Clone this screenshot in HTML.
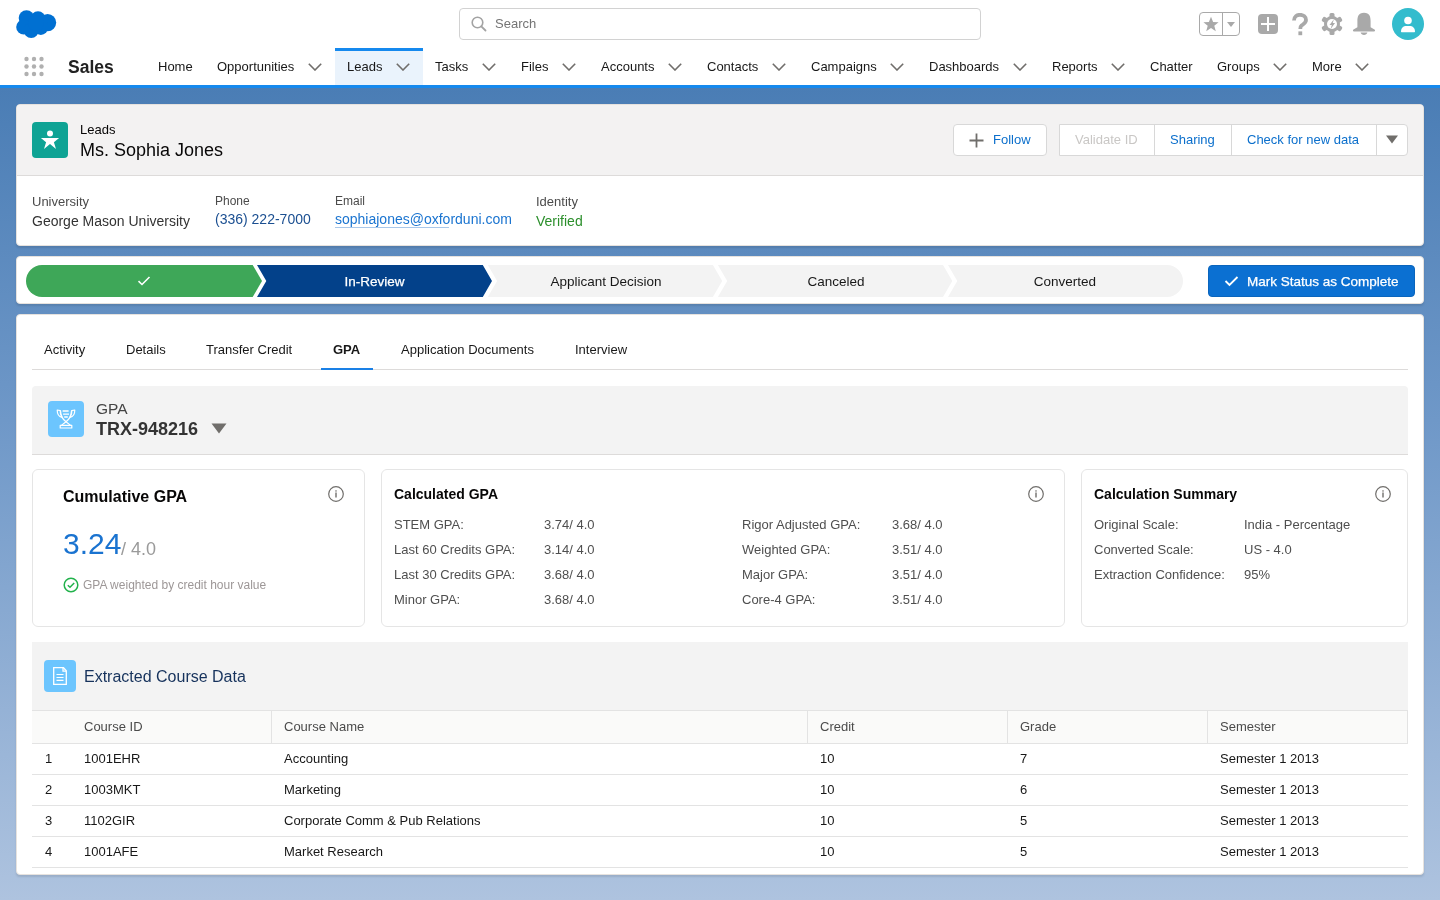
<!DOCTYPE html>
<html><head><meta charset="utf-8">
<style>body>*{will-change:transform}
*{box-sizing:border-box;margin:0;padding:0}
html,body{width:1440px;height:900px;overflow:hidden}
body{font-family:"Liberation Sans",sans-serif;color:#181818;position:relative;
 background:linear-gradient(to bottom,#4a7db5 88px,#6f98c8 420px,#aec3df 900px);}
.a{position:absolute;white-space:nowrap}
.t13{font-size:13px;line-height:13px}
.t12{font-size:12px;line-height:12px}
.t14{font-size:14px;line-height:14px}
#hdr{position:absolute;left:0;top:0;width:1440px;height:85px;background:#fff}
#hline{position:absolute;left:0;top:85px;width:1440px;height:3px;background:#1589ee}
.nav{color:#181818}
.chev{position:absolute;top:63px;width:14px;height:8px}
.card{position:absolute;background:#fff;border-radius:4px;border:1px solid #e6e2de;box-shadow:0 2px 2px rgba(0,0,0,0.1)}
.lbl{color:#4b4b4b}
.btn{position:absolute;border:1px solid #d8d8d8;background:#fff;font-size:13px;line-height:30px;color:#0b6fcc}
.sc{position:absolute;border:1px solid #e5e5e5;border-radius:6px;background:#fff}
.rowl{color:#4f4f4f;font-size:13px;line-height:13px}
.th{color:#4b4b4b;font-size:13px;line-height:13px}
.td{color:#181818;font-size:13px;line-height:13px}
.hr{position:absolute;left:32px;width:1376px;height:1px;background:#e3e3e3}
.vr{position:absolute;top:710px;width:1px;height:33px;background:#e3e3e3}
</style></head><body>

<!-- HEADER -->
<div id="hdr"></div>
<div id="hline"></div>
<!-- logo -->
<svg class="a" style="left:16px;top:9px" width="42" height="30" viewBox="0 0 42 30"><g fill="#0070d2">
 <circle cx="10.5" cy="9" r="7.8"/><circle cx="22" cy="9.8" r="7.5"/><circle cx="31.6" cy="13.6" r="8.6"/>
 <circle cx="7.8" cy="18" r="7.6"/><circle cx="15.2" cy="21.4" r="7.6"/><circle cx="24.8" cy="18.6" r="7.4"/><circle cx="20" cy="14" r="8"/></g></svg>
<!-- search -->
<div class="a" style="left:459px;top:8px;width:522px;height:32px;border:1px solid #d2d2d2;border-radius:4px;background:#fff"></div>
<svg class="a" style="left:470px;top:15px" width="18" height="18" viewBox="0 0 18 18"><circle cx="7.5" cy="7.5" r="5.3" fill="none" stroke="#a3a3a3" stroke-width="1.6"/><line x1="11.3" y1="11.3" x2="15.5" y2="15.5" stroke="#a3a3a3" stroke-width="1.8" stroke-linecap="round"/></svg>
<div class="a t13" style="left:495px;top:17px;color:#747474">Search</div>
<!-- right icons -->
<div class="a" style="left:1199px;top:12px;width:41px;height:24px;border:1px solid #a9a9a9;border-radius:4px"></div>
<div class="a" style="left:1222px;top:12px;width:1px;height:24px;background:#a9a9a9"></div>
<svg class="a" style="left:1203px;top:16px" width="16" height="16" viewBox="0 0 16 16"><path d="M8 0.8 L10.1 6.1 L15.6 6.3 L11.3 9.7 L12.8 15.2 L8 12 L3.2 15.2 L4.7 9.7 L0.4 6.3 L5.9 6.1Z" fill="#a9a9a9"/></svg>
<svg class="a" style="left:1226px;top:21px" width="10" height="7" viewBox="0 0 10 7"><path d="M1 1H9L5 6Z" fill="#a9a9a9"/></svg>
<div class="a" style="left:1258px;top:14px;width:20px;height:20px;border-radius:4px;background:#a9a9a9"></div>
<div class="a" style="left:1261px;top:23px;width:14px;height:2px;background:#fff"></div>
<div class="a" style="left:1267px;top:17px;width:2px;height:14px;background:#fff"></div>
<svg class="a" style="left:1290px;top:13px" width="20" height="24" viewBox="0 0 20 24"><path d="M4 7.5 C4 3.5 7 1.8 10 1.8 C13.5 1.8 16 4 16 7 C16 10 13.5 11 11.5 12.5 C10.5 13.3 10.3 14 10.3 16" fill="none" stroke="#a9a9a9" stroke-width="3.8"/><rect x="8.4" y="18.4" width="3.8" height="3.8" fill="#a9a9a9"/></svg>
<svg class="a" style="left:1321px;top:12px" width="22" height="24" viewBox="0 0 22 24">
 <g fill="#a9a9a9"><circle cx="11" cy="12" r="8"/>
 <rect x="8.5" y="1" width="5" height="22" rx="1.5"/>
 <rect x="8.5" y="1" width="5" height="22" rx="1.5" transform="rotate(60 11 12)"/>
 <rect x="8.5" y="1" width="5" height="22" rx="1.5" transform="rotate(-60 11 12)"/></g>
 <circle cx="11" cy="12" r="5" fill="#fff"/>
 <path d="M12.9 7.3 L8.5 13 H10.8 L9.7 16.9 L14 11.1 H11.7Z" fill="#a9a9a9"/>
</svg>
<svg class="a" style="left:1352px;top:12px" width="24" height="24" viewBox="0 0 24 24"><path d="M12 0.8 C17.6 0.8 18.6 4.8 18.6 9 V15.2 L22.5 17.5 C23.4 18 23.2 19.4 22 19.4 H2 C0.8 19.4 0.6 18 1.5 17.5 L5.4 15.2 V9 C5.4 4.8 6.4 0.8 12 0.8Z" fill="#a9a9a9"/><path d="M8.6 20.6 H15.4 C15 22.2 13.7 23 12 23 C10.3 23 9 22.2 8.6 20.6Z" fill="#a9a9a9"/></svg>
<div class="a" style="left:1392px;top:8px;width:32px;height:32px;border-radius:50%;background:#33bccd"></div>
<svg class="a" style="left:1398px;top:14px" width="20" height="20" viewBox="0 0 20 20"><circle cx="10" cy="6.5" r="3.8" fill="#fff"/><path d="M3 17.6 C3 14 5.2 12 8.6 12 H11.4 C14.8 12 17 14 17 17.6 C17 18 16.8 18.2 16.4 18.2 H3.6 C3.2 18.2 3 18 3 17.6Z" fill="#fff"/></svg>

<!-- nav row -->
<svg class="a" style="left:22px;top:56px" width="24" height="22" viewBox="0 -0.5 24 22"><g fill="#b0b0b0">
<circle cx="4.5" cy="2.5" r="2.2"/><circle cx="12" cy="2.5" r="2.2"/><circle cx="19.5" cy="2.5" r="2.2"/>
<circle cx="4.5" cy="10" r="2.2"/><circle cx="12" cy="10" r="2.2"/><circle cx="19.5" cy="10" r="2.2"/>
<circle cx="4.5" cy="17.5" r="2.2"/><circle cx="12" cy="17.5" r="2.2"/><circle cx="19.5" cy="17.5" r="2.2"/></g></svg>
<div class="a" style="left:68px;top:59px;font-size:17.5px;line-height:17.5px;font-weight:bold;color:#222">Sales</div>
<div class="a" style="left:335px;top:48px;width:88px;height:37px;background:#eaf3fc;border-top:3px solid #1589ee"></div>
<div class="a t13 nav" style="left:158px;top:60px">Home</div>
<div class="a t13 nav" style="left:217px;top:60px">Opportunities</div>
<div class="a t13 nav" style="left:347px;top:60px">Leads</div>
<div class="a t13 nav" style="left:435px;top:60px">Tasks</div>
<div class="a t13 nav" style="left:521px;top:60px">Files</div>
<div class="a t13 nav" style="left:601px;top:60px">Accounts</div>
<div class="a t13 nav" style="left:707px;top:60px">Contacts</div>
<div class="a t13 nav" style="left:811px;top:60px">Campaigns</div>
<div class="a t13 nav" style="left:929px;top:60px">Dashboards</div>
<div class="a t13 nav" style="left:1052px;top:60px">Reports</div>
<div class="a t13 nav" style="left:1150px;top:60px">Chatter</div>
<div class="a t13 nav" style="left:1217px;top:60px">Groups</div>
<div class="a t13 nav" style="left:1312px;top:60px">More</div>
<svg width="0" height="0" style="position:absolute"><defs><path id="chv" d="M0.8 0.8 L7 7 L13.2 0.8" fill="none" stroke="#706e6b" stroke-width="1.6"/></defs></svg>
<svg class="chev" style="left:308px"><use href="#chv"/></svg>
<svg class="chev" style="left:396px"><use href="#chv"/></svg>
<svg class="chev" style="left:482px"><use href="#chv"/></svg>
<svg class="chev" style="left:562px"><use href="#chv"/></svg>
<svg class="chev" style="left:668px"><use href="#chv"/></svg>
<svg class="chev" style="left:772px"><use href="#chv"/></svg>
<svg class="chev" style="left:890px"><use href="#chv"/></svg>
<svg class="chev" style="left:1013px"><use href="#chv"/></svg>
<svg class="chev" style="left:1111px"><use href="#chv"/></svg>
<svg class="chev" style="left:1273px"><use href="#chv"/></svg>
<svg class="chev" style="left:1355px"><use href="#chv"/></svg>

<!-- RECORD HEADER CARD -->
<div class="card" style="left:16px;top:104px;width:1408px;height:142px;overflow:hidden">
  <div style="position:absolute;left:0;top:0;width:1406px;height:71px;background:#f3f2f2;border-bottom:1px solid #dddbda"></div>
</div>
<div class="a" style="left:32px;top:122px;width:36px;height:36px;border-radius:4px;background:#0ea394"></div>
<svg class="a" style="left:32px;top:122px" width="36" height="36" viewBox="0 0 36 36"><circle cx="18" cy="11.6" r="3" fill="#fff"/><path d="M8.9 16 H27.1 L21.9 20.2 L24 27 L18 22 L12 27 L14.1 20.2Z" fill="#fff"/></svg>
<div class="a t13" style="left:80px;top:123px;color:#080707">Leads</div>
<div class="a" style="left:80px;top:141px;font-size:18px;line-height:18px;color:#080707">Ms. Sophia Jones</div>

<div class="btn" style="left:953px;top:124px;width:94px;height:32px;border-radius:4px"></div>
<svg class="a" style="left:969px;top:133px" width="15" height="15" viewBox="0 0 15 15"><path d="M7.5 0.5V14.5M0.5 7.5H14.5" stroke="#706e6b" stroke-width="1.8"/></svg>
<div class="a t13" style="left:993px;top:133px;color:#0b6fcc">Follow</div>
<div class="btn" style="left:1059px;top:124px;width:349px;height:32px;border-radius:0 4px 4px 0"></div>
<div class="a" style="left:1154px;top:125px;width:1px;height:30px;background:#d8d8d8"></div>
<div class="a" style="left:1231px;top:125px;width:1px;height:30px;background:#d8d8d8"></div>
<div class="a" style="left:1376px;top:125px;width:1px;height:30px;background:#d8d8d8"></div>
<div class="a t13" style="left:1075px;top:133px;color:#c9c7c5">Validate ID</div>
<div class="a t13" style="left:1170px;top:133px;color:#0b6fcc">Sharing</div>
<div class="a t13" style="left:1247px;top:133px;color:#0b6fcc">Check for new data</div>
<svg class="a" style="left:1386px;top:135px" width="12" height="9" viewBox="0 0 12 9"><path d="M0 0.5H12L6 8.5Z" fill="#706e6b"/></svg>

<div class="a t13 lbl" style="left:32px;top:195px">University</div>
<div class="a t14" style="left:32px;top:214px;color:#333">George Mason University</div>
<div class="a t12 lbl" style="left:215px;top:195px">Phone</div>
<div class="a t14" style="left:215px;top:212px;color:#1b4f91">(336) 222-7000</div>
<div class="a t12 lbl" style="left:335px;top:195px">Email</div>
<div class="a t14" style="left:335px;top:212px;color:#1a74d0">sophiajones@oxforduni.com</div>
<div class="a" style="left:335px;top:227px;width:114px;height:1px;background:#a9c8ea"></div>
<div class="a t13 lbl" style="left:536px;top:195px">Identity</div>
<div class="a t14" style="left:536px;top:214px;color:#2c8f2c">Verified</div>

<!-- PATH -->
<div class="card" style="left:16px;top:256px;width:1408px;height:48px"></div>
<svg class="a" style="left:0;top:256px" width="1440" height="48" viewBox="0 256 1440 48">
  <path d="M42 265 H252.7 L262 281 L252.7 297 H42 A16 16 0 0 1 42 265Z" fill="#3ea758"/>
  <path d="M257 265 H482.8 L492 281 L482.8 297 H257 L266.3 281Z" fill="#03418a"/>
  <path d="M487.8 265 H712.9 L722.2 281 L712.9 297 H487.8 L497.1 281Z" fill="#f3f3f3"/>
  <path d="M717.9 265 H943 L952.3 281 L943 297 H717.9 L727.2 281Z" fill="#f3f3f3"/>
  <path d="M948 265 H1167 A16 16 0 0 1 1167 297 H948 L957.3 281Z" fill="#f3f3f3"/>
</svg>
<svg class="a" style="left:137px;top:275px" width="14" height="12" viewBox="0 0 14 12"><path d="M1.5 6.2 L5 9.5 L12.5 2" fill="none" stroke="#fff" stroke-width="1.6"/></svg>
<div class="a" style="left:257px;top:275px;width:235px;text-align:center;color:#fff;font-size:13.5px;line-height:13px;-webkit-text-stroke:0.25px #fff">In-Review</div>
<div class="a" style="left:490px;top:275px;width:232px;text-align:center;color:#181818;font-size:13.5px;line-height:13px">Applicant Decision</div>
<div class="a" style="left:720px;top:275px;width:232px;text-align:center;color:#181818;font-size:13.5px;line-height:13px">Canceled</div>
<div class="a" style="left:950px;top:275px;width:230px;text-align:center;color:#181818;font-size:13.5px;line-height:13px">Converted</div>
<div class="a" style="left:1208px;top:265px;width:207px;height:32px;border-radius:4px;background:#0b70d2;border:1px solid #0a65bd"></div>
<svg class="a" style="left:1224px;top:275px" width="15" height="12" viewBox="0 0 15 12"><path d="M1.5 6 L5.5 10 L13.5 2" fill="none" stroke="#fff" stroke-width="1.8"/></svg>
<div class="a" style="left:1247px;top:275px;font-size:13.5px;line-height:13.5px;color:#fff;-webkit-text-stroke:0.25px #fff">Mark Status as Complete</div>

<!-- MAIN CARD -->
<div class="card" style="left:16px;top:314px;width:1408px;height:561px"></div>
<div class="a t13" style="left:44px;top:343px">Activity</div>
<div class="a t13" style="left:126px;top:343px">Details</div>
<div class="a t13" style="left:206px;top:343px">Transfer Credit</div>
<div class="a t13" style="left:333px;top:343px;font-weight:bold">GPA</div>
<div class="a t13" style="left:401px;top:343px">Application Documents</div>
<div class="a t13" style="left:575px;top:343px">Interview</div>
<div class="a" style="left:32px;top:369px;width:1376px;height:1px;background:#dddbda"></div>
<div class="a" style="left:321px;top:368px;width:52px;height:2px;background:#1a80e6"></div>

<!-- GPA header -->
<div class="a" style="left:32px;top:386px;width:1376px;height:69px;background:#f3f3f3;border-radius:4px 4px 0 0;border-bottom:1px solid #dddbda"></div>
<div class="a" style="left:48px;top:401px;width:36px;height:36px;border-radius:4px;background:#6cc5fe"></div>
<svg class="a" style="left:48px;top:401px" width="36" height="36" viewBox="0 0 36 36"><g fill="none" stroke="#fff" stroke-width="1.2" stroke-linejoin="round">
<path d="M9.2 9 L12.2 9.6 C12 12 12.6 14.5 14 16.4 C11.2 15.8 9.2 13 9.2 9Z"/>
<path d="M26.8 9 L23.8 9.6 C24 12 23.4 14.5 22 16.4 C24.8 15.8 26.8 13 26.8 9Z"/>
<path d="M12.4 9.4 C12.8 15 15.2 18.8 18 20.8 L22.6 24.4"/>
<path d="M23.6 9.4 C23.2 15 20.8 18.8 18 20.8 L13.4 24.4"/>
<rect x="12.2" y="24.4" width="11.6" height="2.6"/></g>
<g stroke="#fff" stroke-width="1.3"><path d="M14.6 10H20.6M15.1 13.2H21M16.2 16H19.8"/></g></svg>
<div class="a" style="left:96px;top:401px;font-size:15.5px;line-height:15.5px;color:#444">GPA</div>
<div class="a" style="left:96px;top:420px;font-size:18px;line-height:18px;font-weight:bold;color:#333">TRX-948216</div>
<svg class="a" style="left:211px;top:423px" width="16" height="11" viewBox="0 0 16 11"><path d="M0.5 0.5H15.5L8 10.5Z" fill="#706e6b"/></svg>

<!-- stat cards -->
<div class="sc" style="left:32px;top:469px;width:333px;height:158px"></div>
<div class="sc" style="left:381px;top:469px;width:684px;height:158px"></div>
<div class="sc" style="left:1081px;top:469px;width:327px;height:158px"></div>
<svg width="0" height="0" style="position:absolute"><defs><g id="info"><circle cx="8" cy="8" r="7.3" fill="none" stroke="#706e6b" stroke-width="1.2"/><rect x="7.3" y="6.5" width="1.4" height="5" fill="#706e6b"/><rect x="7.3" y="4.3" width="1.4" height="1.3" fill="#706e6b"/></g></defs></svg>
<svg class="a" style="left:328px;top:486px" width="16" height="16"><use href="#info"/></svg>
<svg class="a" style="left:1028px;top:486px" width="16" height="16"><use href="#info"/></svg>
<svg class="a" style="left:1375px;top:486px" width="16" height="16"><use href="#info"/></svg>

<div class="a" style="left:63px;top:489px;font-size:16px;line-height:16px;font-weight:bold;color:#080707">Cumulative GPA</div>
<div class="a" style="left:63px;top:529px;font-size:30px;line-height:30px;color:#1a73d0">3.24</div>
<div class="a" style="left:121px;top:540px;font-size:18px;line-height:18px;color:#9a9a9a">/ 4.0</div>
<svg class="a" style="left:63px;top:577px" width="16" height="16" viewBox="0 0 16 16"><circle cx="8" cy="8" r="6.8" fill="none" stroke="#22b24c" stroke-width="1.5"/><path d="M4.8 8.2 L7 10.3 L11.2 6" fill="none" stroke="#22b24c" stroke-width="1.5"/></svg>
<div class="a t12" style="left:83px;top:579px;color:#9d9797">GPA weighted by credit hour value</div>

<div class="a" style="left:394px;top:487px;font-size:14px;line-height:14px;font-weight:bold;color:#080707">Calculated GPA</div>
<div class="a rowl" style="left:394px;top:518px">STEM GPA:</div>
<div class="a rowl" style="left:394px;top:543px">Last 60 Credits GPA:</div>
<div class="a rowl" style="left:394px;top:568px">Last 30 Credits GPA:</div>
<div class="a rowl" style="left:394px;top:593px">Minor GPA:</div>
<div class="a rowl" style="left:544px;top:518px">3.74/ 4.0</div>
<div class="a rowl" style="left:544px;top:543px">3.14/ 4.0</div>
<div class="a rowl" style="left:544px;top:568px">3.68/ 4.0</div>
<div class="a rowl" style="left:544px;top:593px">3.68/ 4.0</div>
<div class="a rowl" style="left:742px;top:518px">Rigor Adjusted GPA:</div>
<div class="a rowl" style="left:742px;top:543px">Weighted GPA:</div>
<div class="a rowl" style="left:742px;top:568px">Major GPA:</div>
<div class="a rowl" style="left:742px;top:593px">Core-4 GPA:</div>
<div class="a rowl" style="left:892px;top:518px">3.68/ 4.0</div>
<div class="a rowl" style="left:892px;top:543px">3.51/ 4.0</div>
<div class="a rowl" style="left:892px;top:568px">3.51/ 4.0</div>
<div class="a rowl" style="left:892px;top:593px">3.51/ 4.0</div>

<div class="a" style="left:1094px;top:487px;font-size:14px;line-height:14px;font-weight:bold;color:#080707">Calculation Summary</div>
<div class="a rowl" style="left:1094px;top:518px">Original Scale:</div>
<div class="a rowl" style="left:1094px;top:543px">Converted Scale:</div>
<div class="a rowl" style="left:1094px;top:568px">Extraction Confidence:</div>
<div class="a rowl" style="left:1244px;top:518px">India - Percentage</div>
<div class="a rowl" style="left:1244px;top:543px">US - 4.0</div>
<div class="a rowl" style="left:1244px;top:568px">95%</div>

<!-- Extracted Course Data -->
<div class="a" style="left:32px;top:642px;width:1376px;height:68px;background:#f3f3f3"></div>
<div class="a" style="left:32px;top:710px;width:1376px;height:33px;background:#fafaf9"></div>
<div class="a" style="left:44px;top:660px;width:32px;height:32px;border-radius:4px;background:#6cc5fe"></div>
<svg class="a" style="left:44px;top:660px" width="32" height="32" viewBox="0 0 32 32"><path d="M9.7 7.7 H19.5 L22.3 10.7 V24.3 H9.7Z" fill="none" stroke="#fff" stroke-width="1.3"/><path d="M19 8 V11.2 H22" fill="none" stroke="#fff" stroke-width="1.3"/><path d="M12.5 14.5H19.5M12.5 17.5H19.5M12.5 20.3H19.5" stroke="#fff" stroke-width="1.2"/></svg>
<div class="a" style="left:84px;top:669px;font-size:16px;line-height:16px;color:#16325c">Extracted Course Data</div>
<div class="hr" style="top:710px"></div>
<div class="hr" style="top:743px"></div>
<div class="hr" style="top:774px"></div>
<div class="hr" style="top:805px"></div>
<div class="hr" style="top:836px"></div>
<div class="hr" style="top:867px"></div>
<div class="vr" style="left:271px"></div>
<div class="vr" style="left:807px"></div>
<div class="vr" style="left:1007px"></div>
<div class="vr" style="left:1207px"></div>
<div class="vr" style="left:1407px"></div>
<div class="a th" style="left:84px;top:720px">Course ID</div>
<div class="a th" style="left:284px;top:720px">Course Name</div>
<div class="a th" style="left:820px;top:720px">Credit</div>
<div class="a th" style="left:1020px;top:720px">Grade</div>
<div class="a th" style="left:1220px;top:720px">Semester</div>

<div class="a td" style="left:45px;top:752px">1</div>
<div class="a td" style="left:84px;top:752px">1001EHR</div>
<div class="a td" style="left:284px;top:752px">Accounting</div>
<div class="a td" style="left:820px;top:752px">10</div>
<div class="a td" style="left:1020px;top:752px">7</div>
<div class="a td" style="left:1220px;top:752px">Semester 1 2013</div>

<div class="a td" style="left:45px;top:783px">2</div>
<div class="a td" style="left:84px;top:783px">1003MKT</div>
<div class="a td" style="left:284px;top:783px">Marketing</div>
<div class="a td" style="left:820px;top:783px">10</div>
<div class="a td" style="left:1020px;top:783px">6</div>
<div class="a td" style="left:1220px;top:783px">Semester 1 2013</div>

<div class="a td" style="left:45px;top:814px">3</div>
<div class="a td" style="left:84px;top:814px">1102GIR</div>
<div class="a td" style="left:284px;top:814px">Corporate Comm &amp; Pub Relations</div>
<div class="a td" style="left:820px;top:814px">10</div>
<div class="a td" style="left:1020px;top:814px">5</div>
<div class="a td" style="left:1220px;top:814px">Semester 1 2013</div>

<div class="a td" style="left:45px;top:845px">4</div>
<div class="a td" style="left:84px;top:845px">1001AFE</div>
<div class="a td" style="left:284px;top:845px">Market Research</div>
<div class="a td" style="left:820px;top:845px">10</div>
<div class="a td" style="left:1020px;top:845px">5</div>
<div class="a td" style="left:1220px;top:845px">Semester 1 2013</div>

</body></html>
